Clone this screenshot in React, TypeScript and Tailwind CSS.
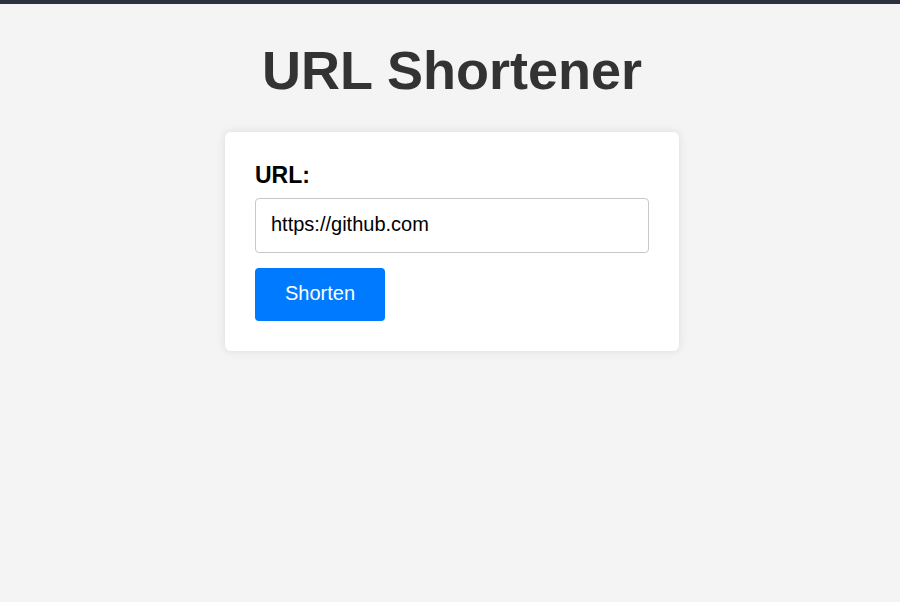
import React from "react";

export default function App() {
  return (
    <div
      className="min-h-[602px] w-full bg-[#f4f4f4] border-t-4 border-[#2c3140] flex flex-col items-center pl-[4px]"
      style={{ fontFamily: '"Liberation Sans", Arial, sans-serif' }}
    >
      <h1 className="mt-[35px] text-[54px] leading-[62px] font-bold text-[#333333]">
        URL Shortener
      </h1>
      <div className="mt-[31px] w-[454px] bg-white rounded-[6px] shadow-[0_0_10px_rgba(0,0,0,0.1)] p-[30px] flex flex-col">
        <label className="mt-[1px] text-[23px] leading-[25px] font-bold text-black">
          URL:
        </label>
        <input
          className="mt-[10px] h-[55px] w-full border border-[#c8c8c8] rounded-[4px] px-[15px] pb-[2px] text-[20px] text-black outline-none"
          defaultValue="https://github.com"
        />
        <div className="mt-[15px]">
          <button className="h-[53px] px-[30px] pb-[3px] bg-[#007bff] text-white text-[20px] rounded-[4px]">
            Shorten
          </button>
        </div>
      </div>
    </div>
  );
}
